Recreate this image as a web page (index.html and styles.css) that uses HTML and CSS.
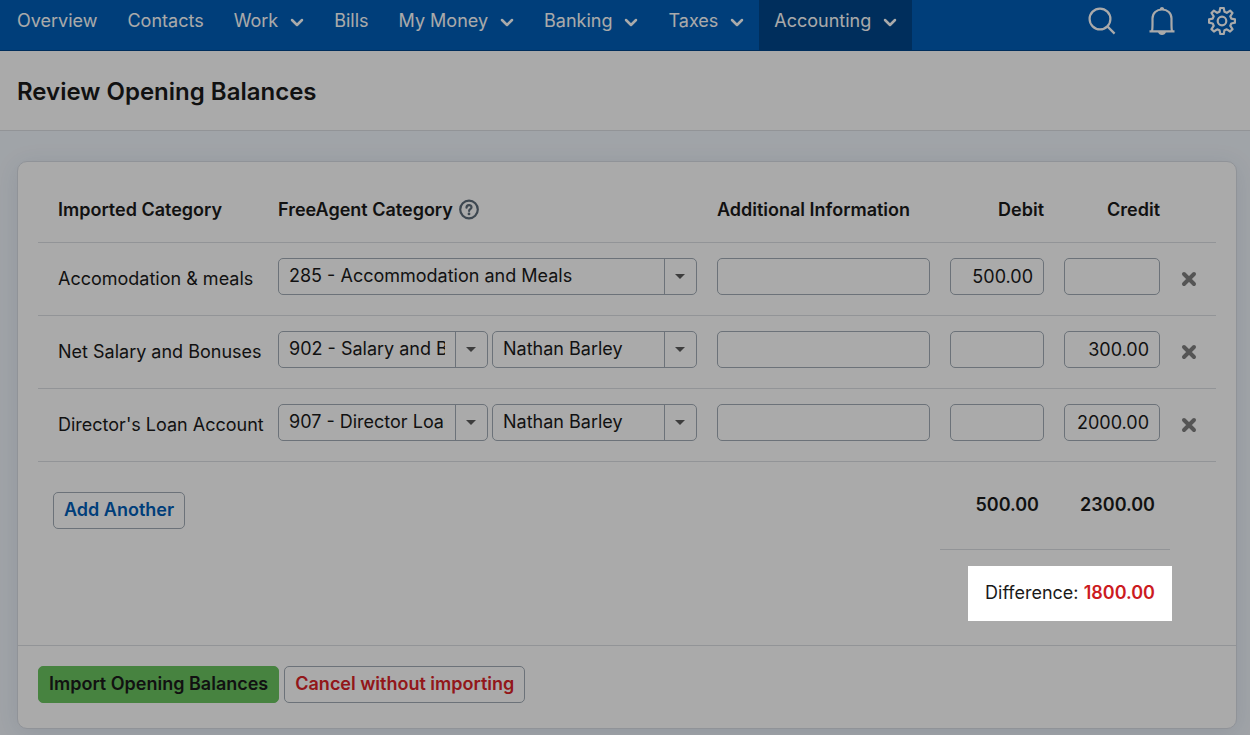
FILE: index.html
```html
<!DOCTYPE html>
<html lang="en">
<head>
    <meta charset="utf-8">
    <title>Review Opening Balances</title>
    <link rel="stylesheet" href="styles.css">
</head>
<body>
    <nav class="navbar">
        <ul class="menu">
            <li><a href="#">Overview</a></li>
            <li><a href="#">Contacts</a></li>
            <li><a href="#">Work <svg class="chevron" viewBox="0 0 14 10"><path d="M2 2l5 5 5-5"/></svg></a></li>
            <li><a href="#">Bills</a></li>
            <li><a href="#">My Money <svg class="chevron" viewBox="0 0 14 10"><path d="M2 2l5 5 5-5"/></svg></a></li>
            <li><a href="#">Banking <svg class="chevron" viewBox="0 0 14 10"><path d="M2 2l5 5 5-5"/></svg></a></li>
            <li><a href="#">Taxes <svg class="chevron" viewBox="0 0 14 10"><path d="M2 2l5 5 5-5"/></svg></a></li>
            <li><a href="#" class="active">Accounting <svg class="chevron" viewBox="0 0 14 10"><path d="M2 2l5 5 5-5"/></svg></a></li>
        </ul>
        <div class="tools">
            <button type="button" aria-label="Search">
                <svg viewBox="0 0 28 28"><circle cx="12" cy="12" r="10.4"/><path d="M19.400 19.400l7.200 7.200"/></svg>
            </button>
            <button type="button" aria-label="Notifications">
                <svg viewBox="0 0 28 28"><path d="M1.500 24.300h25M4 24C4.700 22 4.500 17 4.500 11.500C4.500 6 8.500 2.500 14 2.500S23.500 6 23.500 11.500C23.500 17 23.300 22 24 24"/><path class="solid" d="M10 25h8c-.5 2-2 3-4 3s-3.500-1-4-3zM11.500 2.500c.5-1.700 1.300-2.500 2.500-2.500s2 .8 2.500 2.500z"/></svg>
            </button>
            <button type="button" aria-label="Settings">
                <svg viewBox="0 0 28 28"><circle cx="14" cy="14" r="4.300"/><path d="M11.500 4.800L12.300 1h3.400l.8 3.800 2.300 1 3.300-2.200 2.400 2.400-2.200 3.300 1 2.300 3.700.7v3.400l-3.700.8-1 2.300 2.200 3.300-2.400 2.400-3.300-2.200-2.300 1-.8 3.700h-3.400l-.8-3.700-2.300-1-3.300 2.200-2.400-2.400 2.200-3.300-1-2.300L1 15.700v-3.400l3.700-.7 1-2.300L3.500 6l2.400-2.400 3.300 2.200z"/></svg>
            </button>
        </div>
    </nav>

    <header class="page-header">
        <h1>Review Opening Balances</h1>
    </header>

    <main>
        <form class="card">
            <div class="card-body">
                <table class="balances">
                    <colgroup>
                        <col class="col-imported">
                        <col>
                        <col class="col-info">
                        <col class="col-debit">
                        <col class="col-credit">
                        <col class="col-remove">
                    </colgroup>
                    <thead>
                        <tr>
                            <th scope="col">Imported Category</th>
                            <th scope="col">
                                <span class="with-help">FreeAgent Category
                                    <svg class="help" viewBox="0 0 20 20"><circle cx="10" cy="9.500" r="8.800"/><path d="M7.500 7.700c0-3.400 5-3.300 5-.4 0 1.900-2.400 1.800-2.400 3.600"/><circle class="dot" cx="10" cy="13.900" r="1.400"/></svg>
                                </span>
                            </th>
                            <th scope="col">Additional Information</th>
                            <th scope="col" class="number">Debit</th>
                            <th scope="col" class="number">Credit</th>
                            <td></td>
                        </tr>
                    </thead>
                    <tbody>
                        <tr>
                            <td>Accomodation &amp; meals</td>
                            <td>
                                <div class="selects">
                                    <span class="select"><select aria-label="FreeAgent category"><option>285 - Accommodation and Meals</option></select></span>
                                </div>
                            </td>
                            <td><input type="text" aria-label="Additional information"></td>
                            <td><input type="text" class="number" aria-label="Debit" value="500.00"></td>
                            <td><input type="text" class="number" aria-label="Credit"></td>
                            <td><button type="button" class="remove" aria-label="Remove"><svg viewBox="0 0 18 18"><path d="M4 4l10 10M14 4L4 14"/></svg></button></td>
                        </tr>
                        <tr>
                            <td>Net Salary and Bonuses</td>
                            <td>
                                <div class="selects split">
                                    <span class="select"><select aria-label="FreeAgent category"><option>902 - Salary and Bonuses</option></select></span>
                                    <span class="select"><select aria-label="User"><option>Nathan Barley</option></select></span>
                                </div>
                            </td>
                            <td><input type="text" aria-label="Additional information"></td>
                            <td><input type="text" class="number" aria-label="Debit"></td>
                            <td><input type="text" class="number" aria-label="Credit" value="300.00"></td>
                            <td><button type="button" class="remove" aria-label="Remove"><svg viewBox="0 0 18 18"><path d="M4 4l10 10M14 4L4 14"/></svg></button></td>
                        </tr>
                        <tr>
                            <td>Director's Loan Account</td>
                            <td>
                                <div class="selects split">
                                    <span class="select"><select aria-label="FreeAgent category"><option>907 - Director Loan Account</option></select></span>
                                    <span class="select"><select aria-label="User"><option>Nathan Barley</option></select></span>
                                </div>
                            </td>
                            <td><input type="text" aria-label="Additional information"></td>
                            <td><input type="text" class="number" aria-label="Debit"></td>
                            <td><input type="text" class="number" aria-label="Credit" value="2000.00"></td>
                            <td><button type="button" class="remove" aria-label="Remove"><svg viewBox="0 0 18 18"><path d="M4 4l10 10M14 4L4 14"/></svg></button></td>
                        </tr>
                    </tbody>
                    <tfoot>
                        <tr class="totals">
                            <td colspan="3"><button type="button" class="btn btn-add">Add Another</button></td>
                            <td class="total">500.00</td>
                            <td class="total">2300.00</td>
                            <td></td>
                        </tr>
                        <tr class="difference">
                            <td colspan="3"></td>
                            <td colspan="2" class="difference-cell">
                                <div class="spotlight">Difference: <strong>1800.00</strong></div>
                            </td>
                            <td></td>
                        </tr>
                    </tfoot>
                </table>
            </div>
            <div class="card-footer">
                <button type="submit" class="btn btn-import">Import Opening Balances</button>
                <button type="button" class="btn btn-cancel">Cancel without importing</button>
            </div>
        </form>
    </main>
</body>
</html>
```

FILE: styles.css
```css
* {
    box-sizing: border-box;
}

body {
    margin: 0;
    background-color: #f1f6fc;
    color: #1a1a1a;
    font-family: Inter, "Liberation Sans", sans-serif;
    font-size: 18px;
    line-height: 24px;
}

button, input, select {
    font: inherit;
    color: inherit;
}

button {
    cursor: pointer;
}

/* navigation */
.navbar {
    display: flex;
    justify-content: space-between;
    height: 51px;
    padding: 0 14px 0 2px;
    background-color: #005eb8;
    border-bottom: 1px solid #00468a;
}

.menu {
    display: flex;
    margin: 0;
    padding: 0;
    list-style: none;
}

.menu a {
    display: flex;
    align-items: center;
    gap: 12px;
    height: 50px;
    padding: 0 15px 8px;
    color: #fff;
    text-decoration: none;
    white-space: nowrap;
}

.menu a.active {
    background-color: #00468a;
}

.chevron {
    width: 14px;
    height: 10px;
    margin-top: 4px;
    fill: none;
    stroke: #fff;
    stroke-width: 2.5;
    stroke-linecap: round;
    stroke-linejoin: round;
}

.tools {
    display: flex;
    align-items: center;
    gap: 32px;
    padding-bottom: 8px;
}

.tools button {
    display: flex;
    padding: 0;
    border: none;
    background: none;
}

.tools svg {
    width: 28px;
    height: 28px;
    fill: none;
    stroke: #fff;
    stroke-width: 2.2;
    stroke-linejoin: round;
}

.tools .solid {
    fill: #fff;
    stroke: none;
}

/* page title */
.page-header {
    padding: 25px 17px 22px;
    background-color: #fff;
    border-bottom: 1px solid #dbdee3;
}

h1 {
    margin: 0;
    font-size: 24px;
    line-height: 32px;
    font-weight: 600;
}

main {
    padding: 30px 13px 6px 17px;
}

.card {
    background-color: #fff;
    border: 1px solid #d8dde5;
    border-radius: 10px;
    box-shadow: 0 4px 24px rgba(30, 60, 110, 0.1);
}

.card-body {
    padding: 20px 20px 24px;
}

/* balances table */
.balances {
    width: 100%;
    border-collapse: collapse;
    table-layout: fixed;
}

.col-imported {
    width: 230px;
}

.col-info {
    width: 233px;
}

.col-debit {
    width: 114px;
}

.col-credit {
    width: 116px;
}

.col-remove {
    width: 46px;
}

.balances th,
.balances td {
    padding: 0 10px;
    text-align: left;
    vertical-align: middle;
    white-space: nowrap;
}

.balances th:first-child,
.balances tbody td:first-child {
    padding-left: 20px;
}

.balances th {
    height: 60px;
    padding-bottom: 4px;
    font-weight: 600;
}

.balances thead tr,
.balances tbody tr {
    border-bottom: 1px solid #dbdee3;
}

.balances tbody td {
    height: 73px;
}

.balances tbody td:not(:first-child):not(:last-child) {
    padding-top: 15px;
    padding-bottom: 20px;
}

.balances .number {
    text-align: right;
}

.with-help {
    display: flex;
    align-items: center;
    gap: 6px;
}

.help {
    width: 20px;
    height: 20px;
    overflow: visible;
    fill: none;
    stroke: #5d6c7a;
    stroke-width: 2.2;
    stroke-linecap: round;
}

.help .dot {
    fill: #5d6c7a;
    stroke: none;
}

.balances input,
.select select {
    display: block;
    width: 100%;
    height: 37px;
    padding: 0 10px;
    background-color: #fff;
    border: 1px solid #a2acb6;
    border-radius: 5px;
}

.selects {
    display: grid;
    gap: 4px;
}

.selects.split {
    grid-template-columns: 42fr 41fr;
}

.select {
    position: relative;
    min-width: 0;
}

.select select {
    appearance: none;
    padding-right: 42px;
}

/* divider and arrow over the right end of the select */
.select::before {
    content: "";
    position: absolute;
    top: 1px;
    bottom: 1px;
    right: 32px;
    border-left: 1px solid #a2acb6;
    pointer-events: none;
}

.select::after {
    content: "";
    position: absolute;
    top: 16px;
    right: 12px;
    border: 5px solid transparent;
    border-top-color: #5c5c5c;
    border-bottom: 0;
    pointer-events: none;
}

.remove {
    display: block;
    padding: 0;
    border: none;
    background: none;
}

.remove svg {
    display: block;
    width: 18px;
    height: 18px;
    fill: none;
    stroke: #808080;
    stroke-width: 4;
    stroke-linecap: round;
}

.btn {
    height: 37px;
    padding: 0 10px;
    background-color: #fff;
    border: 1px solid #a2acb6;
    border-radius: 5px;
    font-weight: 600;
}

.btn-add {
    color: #005eb8;
}

.btn-import {
    background-color: #6bc561;
    border-color: #6bc561;
}

.btn-cancel {
    color: #dc2328;
}

.balances .totals td {
    height: 88px;
    padding: 30px 15px 20px;
    vertical-align: top;
}

.balances .totals .total {
    padding-top: 31px;
    text-align: right;
    font-weight: 600;
}

.balances .difference-cell {
    padding: 16px 0 0;
    border-top: 1px solid #dbdee3;
}

/* everything outside of this box is dimmed */
.spotlight {
    position: relative;
    z-index: 10;
    width: max-content;
    margin: 0 -2px 0 auto;
    padding: 15px 17px 16px;
    background-color: #fff;
    box-shadow: 0 0 0 3000px rgba(0, 0, 0, 0.335);
}

.spotlight strong {
    color: #cc1b1f;
    font-weight: 600;
}

.card-footer {
    display: flex;
    gap: 5px;
    padding: 20px 20px 25px;
    border-top: 1px solid #dbdee3;
}
```
